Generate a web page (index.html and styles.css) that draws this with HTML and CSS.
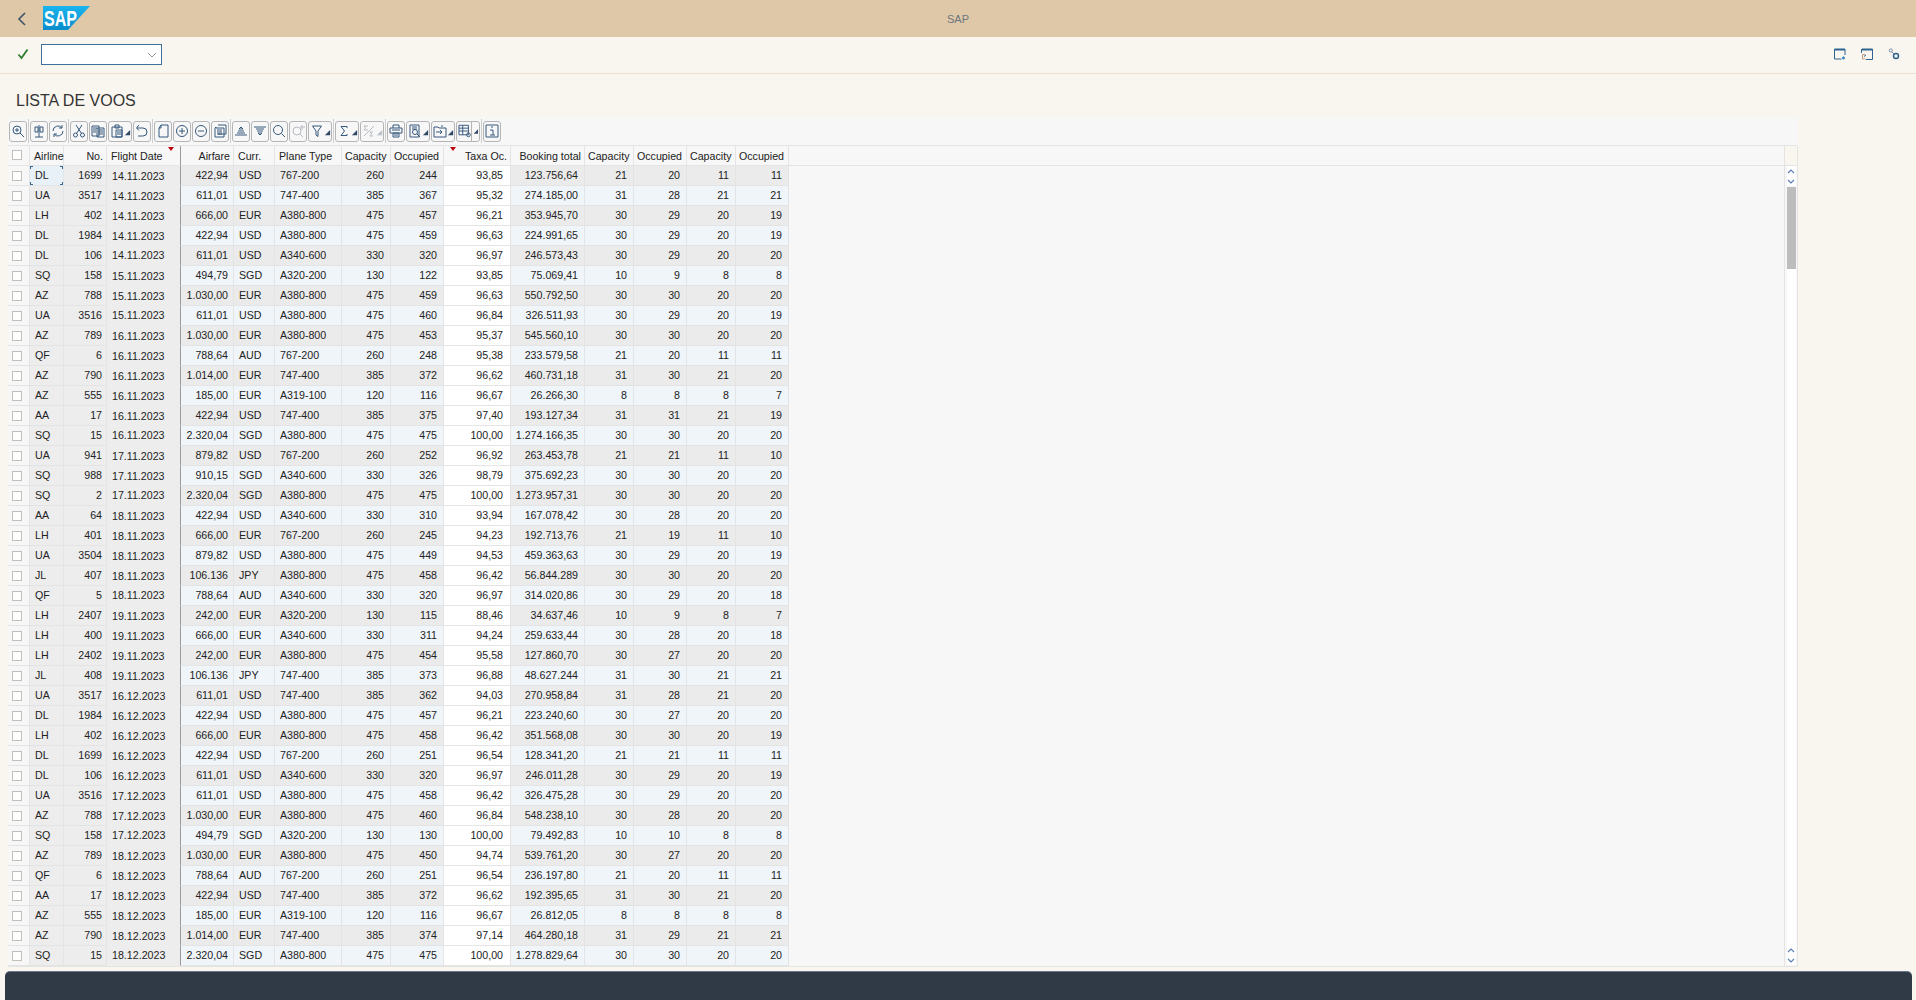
FILE: index.html
```html
<!DOCTYPE html>
<html lang="pt">
<head>
    <meta charset="UTF-8">
    <title>SAP</title>
    <link rel="stylesheet" href="styles.css">
</head>
<body>
    <svg class="icon-defs" width="0" height="0">
        <symbol id="arrow" viewBox="0 0 8 8"><path d="M7 1v6H1z" fill="#2f4a66"/></symbol>
    </svg>

    <header class="shell-bar">
        <button class="back-btn" aria-label="Back">
            <svg width="10" height="16" viewBox="0 0 10 16"><path d="M8 2 2 8l6 6" fill="none" stroke="#3f5468" stroke-width="1.6"/></svg>
        </button>
        <svg class="sap-logo" width="48" height="24" viewBox="0 0 48 24">
            <defs>
                <linearGradient id="sapblue" x1="0" y1="0" x2="0" y2="1">
                    <stop offset="0" stop-color="#19b5ee"/>
                    <stop offset="1" stop-color="#0a8ccc"/>
                </linearGradient>
            </defs>
            <path d="M0 0h47L25 24H0z" fill="url(#sapblue)"/>
            <text x="1" y="20" class="sap-word" textLength="33" lengthAdjust="spacingAndGlyphs">SAP</text>
        </svg>
        <div class="shell-title">SAP</div>
    </header>

    <div class="cmd-bar">
        <svg class="ok-icon" width="12" height="12" viewBox="0 0 12 12"><path d="M1.5 6.5 4.5 10 10.5 1.5" fill="none" stroke="#2c7d2f" stroke-width="1.8"/></svg>
        <div class="cmd-field">
            <svg width="10" height="6" viewBox="0 0 10 6"><path d="M1 1l4 4 4-4" fill="none" stroke="#8b98a6" stroke-width="1"/></svg>
        </div>
        <div class="cmd-right">
            <svg width="12" height="12" viewBox="0 0 12 12"><path d="M.5 1.5h10.500M.5 1v10h7M11 1v6" fill="none" stroke="#2f6391" stroke-width="1"/><path d="M.5 1.500h10.500" stroke="#2f6391" stroke-width="2"/><path d="M8 10h3M9.500 8.500v3" stroke="#2f86c8" stroke-width="1.400"/></svg>
            <svg width="12" height="12" viewBox="0 0 12 12"><path d="M1 1.500h10.500" stroke="#2f6391" stroke-width="2"/><path d="M11.500 1v10.500H5M.5 1v4" fill="none" stroke="#2f6391"/><path d="M4 6.500H1.500v4.500h3" fill="none" stroke="#c59a7a"/><path d="M3 8.500l2-1.500" stroke="#2f6391"/></svg>
            <svg width="12" height="12" viewBox="0 0 12 12" fill="none" stroke="#2f6391"><circle cx="8" cy="8" r="2.500" stroke-width="1.500"/><circle cx="2.800" cy="2.500" r="1.600" stroke="#7b8fb0"/><path d="M4 4l2 2" stroke="#7b8fb0"/></svg>
        </div>
    </div>

    <h1 class="page-title">LISTA DE VOOS</h1>

    <section class="grid">
        <div class="alv-toolbar">
            <button class="tb"><svg viewBox="0 0 14 14"><circle cx="6" cy="6" r="4"/><path d="M9 9l4 4M4 6h4M6 4v4"/></svg></button>
            <span class="tb-sep"></span>
            <button class="tb"><svg viewBox="0 0 14 14"><path d="M7 1v12M3 13h8M3 3h3v5H3zM8 3h3v5H8z"/></svg></button>
            <button class="tb"><svg viewBox="0 0 14 14"><path d="M2 7a5 5 0 0 1 9-3M12 7a5 5 0 0 1-9 3M11 1v3H8M3 13v-3h3"/></svg></button>
            <span class="tb-sep"></span>
            <button class="tb"><svg viewBox="0 0 14 14"><circle cx="3.500" cy="11" r="2"/><circle cx="10.500" cy="11" r="2"/><path d="M4.500 9.500 10 1M9.500 9.500 4 1"/></svg></button>
            <button class="tb"><svg viewBox="0 0 14 14"><path d="M1 2h7v10H1zM6 4h7v9H6z"/><path d="M2 4h4M2 6h3M2 8h3M7 6h5M7 8h5M7 10h5"/></svg></button>
            <button class="tb menu"><svg viewBox="0 0 14 14"><path d="M2 3h10v10H2zM5 1h4v3H5zM6 6h6v7H6zM7 8h4M7 10h4"/></svg><svg class="arr"><use href="#arrow"/></svg></button>
            <button class="tb"><svg viewBox="0 0 14 14"><path d="M4 1 1.500 4 4 6.500M2 4h6a4 4 0 0 1 0 8H3"/></svg></button>
            <span class="tb-sep"></span>
            <button class="tb"><svg viewBox="0 0 14 14"><path d="M5 1h7v12H3V4z"/><path d="M5 1v3H3"/></svg></button>
            <button class="tb"><svg viewBox="0 0 14 14"><circle cx="7" cy="7" r="5.500"/><path d="M4 7h6M7 4v6"/></svg></button>
            <button class="tb"><svg viewBox="0 0 14 14"><circle cx="7" cy="7" r="5.500"/><path d="M4 7h6"/></svg></button>
            <button class="tb"><svg viewBox="0 0 14 14"><path d="M5 1h8v9H5M3 3v1h8v9H2V4zM4 6h5M4 8h5M4 10h5"/></svg></button>
            <span class="tb-sep"></span>
            <button class="tb"><svg viewBox="0 0 14 14"><path d="M7 3 5 5h4zM4 7h6M3 9h8M1 11h12"/></svg></button>
            <button class="tb"><svg viewBox="0 0 14 14"><path d="M1 3h12M3 5h8M4 7h6M7 11 5 9h4z"/></svg></button>
            <button class="tb"><svg viewBox="0 0 14 14"><circle cx="6" cy="6" r="4.500"/><path d="M9.500 9.500 13 13"/></svg></button>
            <button class="tb off"><svg viewBox="0 0 14 14"><circle cx="6" cy="7" r="4"/><path d="M9 10l3 3M11 1v5M9 3h5"/></svg></button>
            <button class="tb menu"><svg viewBox="0 0 14 14"><path d="M2.500 2h9L8 7v5.500l-2-1.500V7z"/></svg><svg class="arr"><use href="#arrow"/></svg></button>
            <span class="tb-sep"></span>
            <button class="tb menu"><svg viewBox="0 0 14 14"><path d="M10 4V2.500H4L7.500 7 4 11.500h6V10"/></svg><svg class="arr"><use href="#arrow"/></svg></button>
            <button class="tb menu off"><svg viewBox="0 0 14 14"><path d="M6 2H2l1.500 2L2 6h4M2 12 12 2M11 8H8l1.500 2L8 12h3"/></svg><svg class="arr"><use href="#arrow"/></svg></button>
            <span class="tb-sep"></span>
            <button class="tb"><svg viewBox="0 0 14 14"><path d="M4 4V1h6v3M1 4h12v5H1zM4 9h6v4H4zM5 11h4M3 6h8"/></svg></button>
            <button class="tb menu"><svg viewBox="0 0 14 14"><path d="M2 1h9v12H2zM4 3h5M4 5h5"/><circle cx="7" cy="8" r="2.500"/><path d="M9 10l3 3"/></svg><svg class="arr"><use href="#arrow"/></svg></button>
            <button class="tb menu"><svg viewBox="0 0 14 14"><path d="M1 3h4l1 1h7v9H1zM9 1v2"/><path d="M3 8h6M7 6l2 2-2 2"/></svg><svg class="arr"><use href="#arrow"/></svg></button>
            <button class="tb menu split"><svg viewBox="0 0 14 14"><path d="M1 1h10v10H1zM1 4h10M1 7h10M5 1v10"/><circle cx="11" cy="11" r="2"/></svg><svg class="arr"><use href="#arrow"/></svg></button>
            <span class="tb-sep"></span>
            <button class="tb"><svg viewBox="0 0 14 14"><path d="M1 1h12v12H1zM5 6h3v5M5 11h5M6 3h2"/></svg></button>
        </div>

        <div class="grid-body">
            <div class="table-wrap">
                <table class="alv">
                    <colgroup>
                        <col class="c-sel"><col class="c-air"><col class="c-no"><col class="c-date"><col class="c-fare"><col class="c-cur"><col class="c-type"><col class="c-cap"><col class="c-occ"><col class="c-tax"><col class="c-book"><col class="c-cap"><col class="c-occ"><col class="c-cap"><col class="c-occ">
                    </colgroup>
                    <thead>
                        <tr><th><i class="chk"></i></th><th>Airline</th><th>No.</th><th class="sorted">Flight Date</th><th>Airfare</th><th>Curr.</th><th>Plane Type</th><th>Capacity</th><th>Occupied</th><th class="sorted">Taxa Oc.</th><th>Booking total</th><th>Capacity</th><th>Occupied</th><th>Capacity</th><th>Occupied</th></tr>
                    </thead>
                    <tbody>
                        <tr class="current"><td><i class="chk"></i></td><td>DL</td><td>1699</td><td><b>14.11.2023</b></td><td>422,94</td><td>USD</td><td>767-200</td><td>260</td><td>244</td><td>93,85</td><td>123.756,64</td><td>21</td><td>20</td><td>11</td><td>11</td></tr>
                        <tr><td><i class="chk"></i></td><td>UA</td><td>3517</td><td><b>14.11.2023</b></td><td>611,01</td><td>USD</td><td>747-400</td><td>385</td><td>367</td><td>95,32</td><td>274.185,00</td><td>31</td><td>28</td><td>21</td><td>21</td></tr>
                        <tr><td><i class="chk"></i></td><td>LH</td><td>402</td><td><b>14.11.2023</b></td><td>666,00</td><td>EUR</td><td>A380-800</td><td>475</td><td>457</td><td>96,21</td><td>353.945,70</td><td>30</td><td>29</td><td>20</td><td>19</td></tr>
                        <tr><td><i class="chk"></i></td><td>DL</td><td>1984</td><td><b>14.11.2023</b></td><td>422,94</td><td>USD</td><td>A380-800</td><td>475</td><td>459</td><td>96,63</td><td>224.991,65</td><td>30</td><td>29</td><td>20</td><td>19</td></tr>
                        <tr><td><i class="chk"></i></td><td>DL</td><td>106</td><td>14.11.2023</td><td>611,01</td><td>USD</td><td>A340-600</td><td>330</td><td>320</td><td>96,97</td><td>246.573,43</td><td>30</td><td>29</td><td>20</td><td>20</td></tr>
                        <tr><td><i class="chk"></i></td><td>SQ</td><td>158</td><td><b>15.11.2023</b></td><td>494,79</td><td>SGD</td><td>A320-200</td><td>130</td><td>122</td><td>93,85</td><td>75.069,41</td><td>10</td><td>9</td><td>8</td><td>8</td></tr>
                        <tr><td><i class="chk"></i></td><td>AZ</td><td>788</td><td><b>15.11.2023</b></td><td>1.030,00</td><td>EUR</td><td>A380-800</td><td>475</td><td>459</td><td>96,63</td><td>550.792,50</td><td>30</td><td>30</td><td>20</td><td>20</td></tr>
                        <tr><td><i class="chk"></i></td><td>UA</td><td>3516</td><td>15.11.2023</td><td>611,01</td><td>USD</td><td>A380-800</td><td>475</td><td>460</td><td>96,84</td><td>326.511,93</td><td>30</td><td>29</td><td>20</td><td>19</td></tr>
                        <tr><td><i class="chk"></i></td><td>AZ</td><td>789</td><td><b>16.11.2023</b></td><td>1.030,00</td><td>EUR</td><td>A380-800</td><td>475</td><td>453</td><td>95,37</td><td>545.560,10</td><td>30</td><td>30</td><td>20</td><td>20</td></tr>
                        <tr><td><i class="chk"></i></td><td>QF</td><td>6</td><td><b>16.11.2023</b></td><td>788,64</td><td>AUD</td><td>767-200</td><td>260</td><td>248</td><td>95,38</td><td>233.579,58</td><td>21</td><td>20</td><td>11</td><td>11</td></tr>
                        <tr><td><i class="chk"></i></td><td>AZ</td><td>790</td><td><b>16.11.2023</b></td><td>1.014,00</td><td>EUR</td><td>747-400</td><td>385</td><td>372</td><td>96,62</td><td>460.731,18</td><td>31</td><td>30</td><td>21</td><td>20</td></tr>
                        <tr><td><i class="chk"></i></td><td>AZ</td><td>555</td><td><b>16.11.2023</b></td><td>185,00</td><td>EUR</td><td>A319-100</td><td>120</td><td>116</td><td>96,67</td><td>26.266,30</td><td>8</td><td>8</td><td>8</td><td>7</td></tr>
                        <tr><td><i class="chk"></i></td><td>AA</td><td>17</td><td><b>16.11.2023</b></td><td>422,94</td><td>USD</td><td>747-400</td><td>385</td><td>375</td><td>97,40</td><td>193.127,34</td><td>31</td><td>31</td><td>21</td><td>19</td></tr>
                        <tr><td><i class="chk"></i></td><td>SQ</td><td>15</td><td>16.11.2023</td><td>2.320,04</td><td>SGD</td><td>A380-800</td><td>475</td><td>475</td><td>100,00</td><td>1.274.166,35</td><td>30</td><td>30</td><td>20</td><td>20</td></tr>
                        <tr><td><i class="chk"></i></td><td>UA</td><td>941</td><td><b>17.11.2023</b></td><td>879,82</td><td>USD</td><td>767-200</td><td>260</td><td>252</td><td>96,92</td><td>263.453,78</td><td>21</td><td>21</td><td>11</td><td>10</td></tr>
                        <tr><td><i class="chk"></i></td><td>SQ</td><td>988</td><td><b>17.11.2023</b></td><td>910,15</td><td>SGD</td><td>A340-600</td><td>330</td><td>326</td><td>98,79</td><td>375.692,23</td><td>30</td><td>30</td><td>20</td><td>20</td></tr>
                        <tr><td><i class="chk"></i></td><td>SQ</td><td>2</td><td>17.11.2023</td><td>2.320,04</td><td>SGD</td><td>A380-800</td><td>475</td><td>475</td><td>100,00</td><td>1.273.957,31</td><td>30</td><td>30</td><td>20</td><td>20</td></tr>
                        <tr><td><i class="chk"></i></td><td>AA</td><td>64</td><td><b>18.11.2023</b></td><td>422,94</td><td>USD</td><td>A340-600</td><td>330</td><td>310</td><td>93,94</td><td>167.078,42</td><td>30</td><td>28</td><td>20</td><td>20</td></tr>
                        <tr><td><i class="chk"></i></td><td>LH</td><td>401</td><td><b>18.11.2023</b></td><td>666,00</td><td>EUR</td><td>767-200</td><td>260</td><td>245</td><td>94,23</td><td>192.713,76</td><td>21</td><td>19</td><td>11</td><td>10</td></tr>
                        <tr><td><i class="chk"></i></td><td>UA</td><td>3504</td><td><b>18.11.2023</b></td><td>879,82</td><td>USD</td><td>A380-800</td><td>475</td><td>449</td><td>94,53</td><td>459.363,63</td><td>30</td><td>29</td><td>20</td><td>19</td></tr>
                        <tr><td><i class="chk"></i></td><td>JL</td><td>407</td><td><b>18.11.2023</b></td><td>106.136</td><td>JPY</td><td>A380-800</td><td>475</td><td>458</td><td>96,42</td><td>56.844.289</td><td>30</td><td>30</td><td>20</td><td>20</td></tr>
                        <tr><td><i class="chk"></i></td><td>QF</td><td>5</td><td>18.11.2023</td><td>788,64</td><td>AUD</td><td>A340-600</td><td>330</td><td>320</td><td>96,97</td><td>314.020,86</td><td>30</td><td>29</td><td>20</td><td>18</td></tr>
                        <tr><td><i class="chk"></i></td><td>LH</td><td>2407</td><td><b>19.11.2023</b></td><td>242,00</td><td>EUR</td><td>A320-200</td><td>130</td><td>115</td><td>88,46</td><td>34.637,46</td><td>10</td><td>9</td><td>8</td><td>7</td></tr>
                        <tr><td><i class="chk"></i></td><td>LH</td><td>400</td><td><b>19.11.2023</b></td><td>666,00</td><td>EUR</td><td>A340-600</td><td>330</td><td>311</td><td>94,24</td><td>259.633,44</td><td>30</td><td>28</td><td>20</td><td>18</td></tr>
                        <tr><td><i class="chk"></i></td><td>LH</td><td>2402</td><td><b>19.11.2023</b></td><td>242,00</td><td>EUR</td><td>A380-800</td><td>475</td><td>454</td><td>95,58</td><td>127.860,70</td><td>30</td><td>27</td><td>20</td><td>20</td></tr>
                        <tr><td><i class="chk"></i></td><td>JL</td><td>408</td><td><b>19.11.2023</b></td><td>106.136</td><td>JPY</td><td>747-400</td><td>385</td><td>373</td><td>96,88</td><td>48.627.244</td><td>31</td><td>30</td><td>21</td><td>21</td></tr>
                        <tr><td><i class="chk"></i></td><td>UA</td><td>3517</td><td><b>16.12.2023</b></td><td>611,01</td><td>USD</td><td>747-400</td><td>385</td><td>362</td><td>94,03</td><td>270.958,84</td><td>31</td><td>28</td><td>21</td><td>20</td></tr>
                        <tr><td><i class="chk"></i></td><td>DL</td><td>1984</td><td><b>16.12.2023</b></td><td>422,94</td><td>USD</td><td>A380-800</td><td>475</td><td>457</td><td>96,21</td><td>223.240,60</td><td>30</td><td>27</td><td>20</td><td>20</td></tr>
                        <tr><td><i class="chk"></i></td><td>LH</td><td>402</td><td><b>16.12.2023</b></td><td>666,00</td><td>EUR</td><td>A380-800</td><td>475</td><td>458</td><td>96,42</td><td>351.568,08</td><td>30</td><td>30</td><td>20</td><td>19</td></tr>
                        <tr><td><i class="chk"></i></td><td>DL</td><td>1699</td><td><b>16.12.2023</b></td><td>422,94</td><td>USD</td><td>767-200</td><td>260</td><td>251</td><td>96,54</td><td>128.341,20</td><td>21</td><td>21</td><td>11</td><td>11</td></tr>
                        <tr><td><i class="chk"></i></td><td>DL</td><td>106</td><td><b>16.12.2023</b></td><td>611,01</td><td>USD</td><td>A340-600</td><td>330</td><td>320</td><td>96,97</td><td>246.011,28</td><td>30</td><td>29</td><td>20</td><td>19</td></tr>
                        <tr><td><i class="chk"></i></td><td>UA</td><td>3516</td><td><b>17.12.2023</b></td><td>611,01</td><td>USD</td><td>A380-800</td><td>475</td><td>458</td><td>96,42</td><td>326.475,28</td><td>30</td><td>29</td><td>20</td><td>20</td></tr>
                        <tr><td><i class="chk"></i></td><td>AZ</td><td>788</td><td><b>17.12.2023</b></td><td>1.030,00</td><td>EUR</td><td>A380-800</td><td>475</td><td>460</td><td>96,84</td><td>548.238,10</td><td>30</td><td>28</td><td>20</td><td>20</td></tr>
                        <tr><td><i class="chk"></i></td><td>SQ</td><td>158</td><td>17.12.2023</td><td>494,79</td><td>SGD</td><td>A320-200</td><td>130</td><td>130</td><td>100,00</td><td>79.492,83</td><td>10</td><td>10</td><td>8</td><td>8</td></tr>
                        <tr><td><i class="chk"></i></td><td>AZ</td><td>789</td><td><b>18.12.2023</b></td><td>1.030,00</td><td>EUR</td><td>A380-800</td><td>475</td><td>450</td><td>94,74</td><td>539.761,20</td><td>30</td><td>27</td><td>20</td><td>20</td></tr>
                        <tr><td><i class="chk"></i></td><td>QF</td><td>6</td><td><b>18.12.2023</b></td><td>788,64</td><td>AUD</td><td>767-200</td><td>260</td><td>251</td><td>96,54</td><td>236.197,80</td><td>21</td><td>20</td><td>11</td><td>11</td></tr>
                        <tr><td><i class="chk"></i></td><td>AA</td><td>17</td><td><b>18.12.2023</b></td><td>422,94</td><td>USD</td><td>747-400</td><td>385</td><td>372</td><td>96,62</td><td>192.395,65</td><td>31</td><td>30</td><td>21</td><td>20</td></tr>
                        <tr><td><i class="chk"></i></td><td>AZ</td><td>555</td><td><b>18.12.2023</b></td><td>185,00</td><td>EUR</td><td>A319-100</td><td>120</td><td>116</td><td>96,67</td><td>26.812,05</td><td>8</td><td>8</td><td>8</td><td>8</td></tr>
                        <tr><td><i class="chk"></i></td><td>AZ</td><td>790</td><td><b>18.12.2023</b></td><td>1.014,00</td><td>EUR</td><td>747-400</td><td>385</td><td>374</td><td>97,14</td><td>464.280,18</td><td>31</td><td>29</td><td>21</td><td>21</td></tr>
                        <tr><td><i class="chk"></i></td><td>SQ</td><td>15</td><td>18.12.2023</td><td>2.320,04</td><td>SGD</td><td>A380-800</td><td>475</td><td>475</td><td>100,00</td><td>1.278.829,64</td><td>30</td><td>30</td><td>20</td><td>20</td></tr>
                    </tbody>
                </table>
            </div>
            <div class="scrollbar">
                <div class="sb-head"></div>
                <div class="sb-btn"><svg width="8" height="5" viewBox="0 0 8 5"><path d="M1 4l3-3 3 3" fill="none" stroke="#5b7fb5" stroke-width="1.200"/></svg></div>
                <div class="sb-btn"><svg width="8" height="5" viewBox="0 0 8 5"><path d="M1 1l3 3 3-3" fill="none" stroke="#5b7fb5" stroke-width="1.200"/></svg></div>
                <div class="sb-thumb"></div>
                <div class="sb-track"></div>
                <div class="sb-btn"><svg width="8" height="5" viewBox="0 0 8 5"><path d="M1 4l3-3 3 3" fill="none" stroke="#5b7fb5" stroke-width="1.200"/></svg></div>
                <div class="sb-btn"><svg width="8" height="5" viewBox="0 0 8 5"><path d="M1 1l3 3 3-3" fill="none" stroke="#5b7fb5" stroke-width="1.200"/></svg></div>
            </div>
        </div>
    </section>

    <footer class="status-bar"></footer>
</body>
</html>
```

FILE: styles.css
```css
* {
    box-sizing: border-box;
}
html, body {
    height: 100%;
}
body {
    margin: 0;
    height: 1000px;
    overflow: hidden;
    display: flex;
    flex-direction: column;
    background-color: #f9f6ef;
    color: #222;
    font-family: "Liberation Sans", Arial, sans-serif;
    font-size: 10.67px;
}
.icon-defs {
    position: absolute;
}

/* top shell */
.shell-bar {
    height: 37px;
    flex: none;
    display: flex;
    align-items: center;
    background-color: #dfc8a7;
    position: relative;
}
.back-btn {
    width: 12px;
    height: 16px;
    margin-left: 17px;
    padding: 0;
    border: none;
    background: none;
    display: flex;
}
.sap-logo {
    margin-left: 14px;
    margin-top: -1px;
}
.sap-word {
    font-family: "Liberation Sans", Arial, sans-serif;
    font-size: 22px;
    font-weight: bold;
    fill: #fff;
}
.shell-title {
    position: absolute;
    left: 0;
    right: 0;
    text-align: center;
    font-size: 11px;
    color: #6c7680;
}
.cmd-bar {
    height: 37px;
    flex: none;
    display: flex;
    align-items: center;
    padding: 0 16px 0 17px;
    border-bottom: 1px solid #eadfd0;
}
.ok-icon {
    margin-top: -2px;
}
.cmd-field {
    width: 121px;
    height: 21px;
    margin-left: 12px;
    margin-top: -1px;
    background-color: #fff;
    border: 1px solid #3f6f9c;
    display: flex;
    align-items: center;
    justify-content: flex-end;
    padding-right: 4px;
}
.cmd-right {
    margin-left: auto;
    display: flex;
    gap: 15px;
    margin-top: -2px;
}
.page-title {
    margin: 15px 0 0 16px;
    height: 24px;
    line-height: 24px;
    flex: none;
    font-size: 16px;
    font-weight: normal;
    color: #333;
}

/* grid */
.grid {
    width: 1790px;
    height: 850px;
    flex: none;
    margin: 4px 0 0 8px;
    display: flex;
    flex-direction: column;
}
.alv-toolbar {
    height: 29px;
    flex: none;
    display: flex;
    align-items: center;
    padding: 0 0 0 1px;
    background-color: #f7f7f7;
    border-bottom: 1px solid #e4e4e4;
    border-right: 1px solid #f7f7f7;
}
.tb {
    width: 18px;
    height: 21px;
    margin-right: 1px;
    padding: 0;
    display: flex;
    align-items: center;
    justify-content: center;
    background-color: #f7f7f7;
    border: 1px solid #b5b5b5;
    border-radius: 3px;
}
.tb svg {
    width: 14px;
    height: 14px;
    fill: none;
    stroke: #35587d;
    stroke-width: 1;
}
.tb.menu {
    width: 24px;
    justify-content: flex-start;
    padding-left: 1px;
}
.tb .arr {
    width: 7px;
    height: 7px;
    stroke: none;
    margin-top: 3px;
}
.tb.split .arr {
    border-left: 1px solid #b5b5b5;
    width: 8px;
    height: 19px;
    padding-left: 1px;
    margin-top: 0;
}
.tb.off svg {
    stroke: #b7bcc2;
}
.tb.off .arr {
    opacity: .35;
}
.tb-sep {
    width: 1px;
    height: 24px;
    margin: 0 1px 0 0;
    background-color: #cfcfcf;
}
.grid-body {
    flex: 1;
    display: flex;
    min-height: 0;
    border-right: 1px solid #e4e4e4;
    border-bottom: 1px solid #e4e4e4;
    background-color: #f7f7f7;
}
.table-wrap {
    flex: 1;
    min-width: 0;
    background: linear-gradient(#f7f7f7 19px, #e4e4e4 19px, #e4e4e4 20px, #f7f7f7 20px);
}
.alv {
    width: 781px;
    table-layout: fixed;
    border-collapse: separate;
    border-spacing: 0;
}
.c-sel { width: 22px; }
.c-air { width: 34px; }
.c-no { width: 43px; }
.c-date { width: 74px; }
.c-fare { width: 53px; }
.c-cur { width: 41px; }
.c-type { width: 67px; }
.c-cap { width: 49px; }
.c-occ { width: 53px; }
.c-tax { width: 67px; }
.c-book { width: 74px; }
.alv th, .alv td {
    height: 20px;
    padding: 0 6px 2px 3px;
    font-weight: normal;
    white-space: nowrap;
    overflow: visible;
    border-right: 1px solid #e4e4e4;
    border-bottom: 1px solid #e4e4e4;
    text-align: right;
}
.alv th {
    position: relative;
    height: 20px;
    background-color: #f7f7f7;
    color: #222;
    padding: 0 3px 0 4px;
    text-align: left;
}
.alv tbody td {
    background-color: #f0f5fa;
}
.alv tbody tr:nth-child(odd) td {
    background-color: #ebebeb;
}
.alv tbody td:nth-child(-n+4),
.alv tbody tr:nth-child(odd) td:nth-child(-n+4) {
    background-color: #ededed;
}
.alv tbody td:first-child,
.alv tbody tr:nth-child(odd) td:first-child {
    background-color: #f7f7f7;
}
.alv tbody td:nth-child(10),
.alv tbody tr:nth-child(odd) td:nth-child(10) {
    background-color: #fff;
}
.alv td:nth-child(2), .alv td:nth-child(6), .alv td:nth-child(7) {
    text-align: left;
    padding-left: 5px;
}
.alv td:nth-child(3) {
    padding-right: 4px;
}
.alv td:nth-child(5) {
    padding-right: 5px;
}
.alv td:nth-child(4) {
    text-align: left;
    padding-left: 5px;
    border-bottom-color: #ededed;
    border-right: 1px solid #9a9a9a;
}
.alv th:nth-child(4) {
    border-right: 1px solid #9a9a9a;
}
.alv td:nth-child(4) b {
    font-weight: normal;
    position: relative;
    top: 1px;
}
.alv th:nth-child(3), .alv th:nth-child(5), .alv th:nth-child(10), .alv th:nth-child(11) {
    text-align: right;
    padding-right: 3px;
}
.alv th:nth-child(8), .alv th:nth-child(9), .alv th:nth-child(12), .alv th:nth-child(13),
.alv th:nth-child(14), .alv th:nth-child(15) {
    padding-left: 3px;
    padding-right: 0;
}
.alv td:nth-child(10) {
    padding-right: 7px;
}
.alv td:nth-child(11) {
    padding-right: 6px;
}
.alv th:first-child, .alv td:first-child {
    padding: 0 0 0 4px;
    text-align: left;
}
.chk {
    display: block;
    width: 10px;
    height: 10px;
    background-color: #fff;
    border: 1px solid #c4bfb8;
}
.alv th .chk {
    margin-top: -2px;
}
.sorted::after {
    content: "";
    position: absolute;
    top: 1px;
    right: 6px;
    border-left: 3px solid transparent;
    border-right: 3px solid transparent;
    border-top: 4px solid #c0000f;
}
.alv th:nth-child(10)::after {
    right: auto;
    left: 6px;
}

/* focused cell has corner marks only */
.current td:nth-child(2) {
    position: relative;
}
.alv tbody tr.current td:nth-child(2) {
    background-color: #e8f0f8;
    background-image:
        linear-gradient(#3a6a96, #3a6a96), linear-gradient(#3a6a96, #3a6a96),
        linear-gradient(#3a6a96, #3a6a96), linear-gradient(#3a6a96, #3a6a96),
        linear-gradient(#3a6a96, #3a6a96), linear-gradient(#3a6a96, #3a6a96),
        linear-gradient(#3a6a96, #3a6a96), linear-gradient(#3a6a96, #3a6a96);
    background-repeat: no-repeat;
    background-size: 3px 1px, 1px 3px, 3px 1px, 1px 3px, 3px 1px, 1px 3px, 3px 1px, 1px 3px;
    background-position: 0 0, 0 0, 100% 0, 100% 0, 0 100%, 0 100%, 100% 100%, 100% 100%;
}

/* vertical scrollbar */
.scrollbar {
    width: 13px;
    flex: none;
    display: flex;
    flex-direction: column;
    align-items: center;
    border-left: 1px solid #e4e4e4;
    padding-bottom: 1px;
}
.sb-head {
    width: 100%;
    height: 20px;
    flex: none;
    background-color: #f9f6ef;
    border-bottom: 1px solid #e4e4e4;
}
.sb-btn {
    width: 9px;
    height: 10px;
    flex: none;
    display: flex;
    align-items: center;
    justify-content: center;
    background-color: #fff;
}
.sb-thumb {
    width: 9px;
    height: 82px;
    flex: none;
    margin-top: 1px;
    background-color: #bdbdbd;
}
.sb-track {
    width: 9px;
    flex: 1;
    background-color: #fff;
}
.status-bar {
    height: 29px;
    flex: none;
    margin: 4px 4px 0 5px;
    background-color: #2f3a46;
    border-top: 1px solid #6b7a88;
    border-radius: 5px 5px 0 0;
}
```
